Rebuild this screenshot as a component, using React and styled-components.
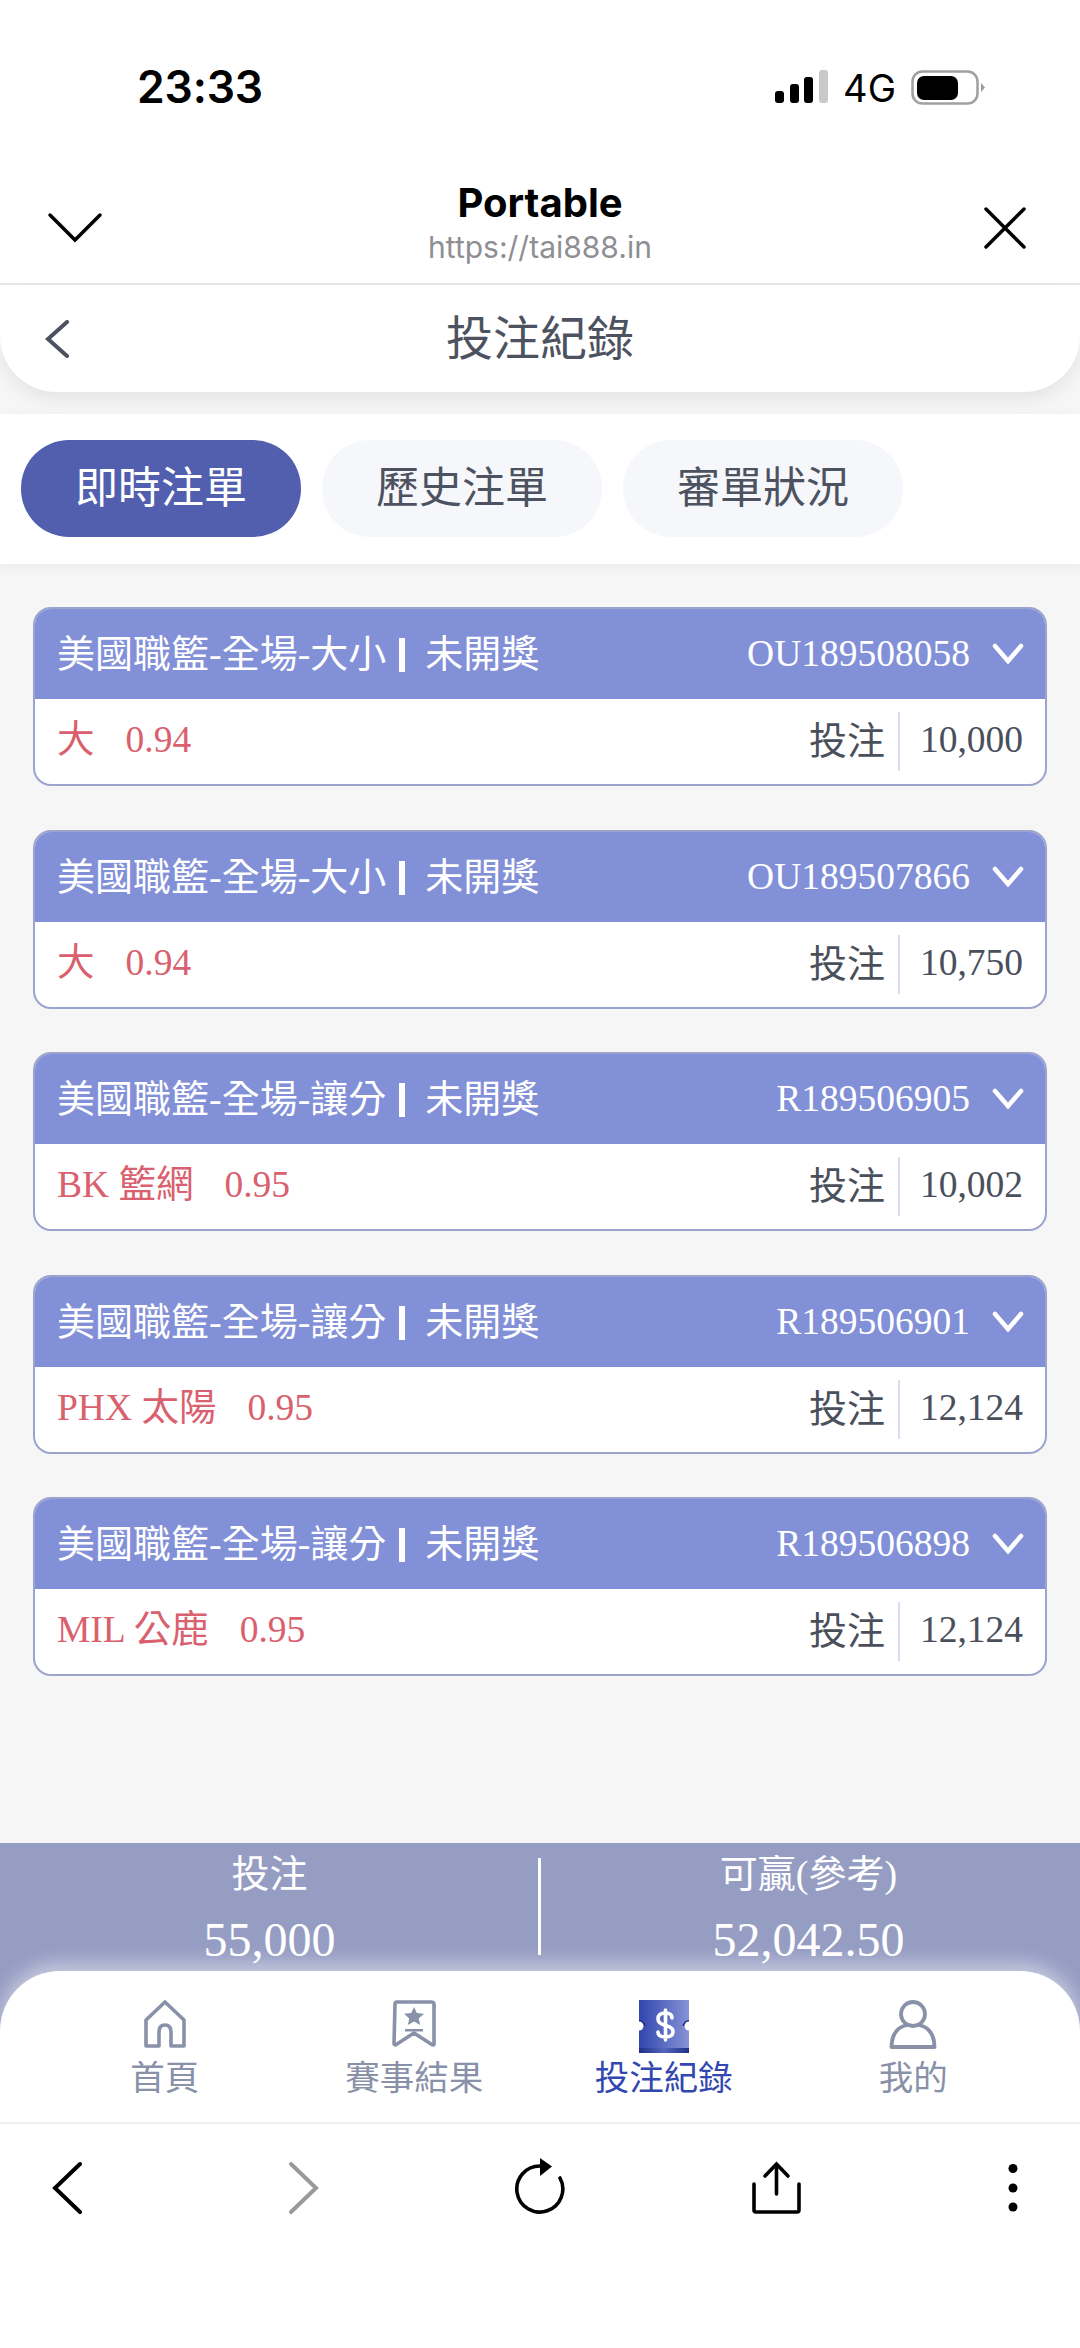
import React from 'react';
import styled, { createGlobalStyle } from 'styled-components';

const serifStack = '"Liberation Serif", "Noto Sans CJK TC", serif';
const sansStack = 'Inter, "Noto Sans CJK TC", sans-serif';

const Global = createGlobalStyle`
  html, body { margin: 0; padding: 0; background: #fff; }
  #root { height: 2348px; }
  * { box-sizing: border-box; }
`;

const Page = styled.div`
  width: 1080px;
  height: 2348px;
  display: flex;
  flex-direction: column;
  background: #f6f6f6;
  overflow: hidden;
  font-family: ${serifStack};
`;

const StatusBar = styled.div`
  height: 140px;
  background: #fff;
  display: flex;
  justify-content: space-between;
  padding: 62px 95px 0 137px;
`;
const Clock = styled.div`
  font: 600 44.5px/50px Inter, sans-serif;
  color: #000;
  letter-spacing: -0.2px;
`;
const StatusIcons = styled.div`
  display: flex;
  align-items: flex-start;
  padding-top: 8px;
  gap: 14px;
`;
const Network = styled.span`
  font: 400 38px/36px Inter, sans-serif;
  color: #000;
  margin-right: 1px;
`;

const TitleBar = styled.div`
  height: 145px;
  background: #fff;
  border-bottom: 2px solid #e8e8ea;
  display: grid;
  grid-template-columns: 1fr auto 1fr;
  padding: 0 54px;
  align-items: center;
`;
const TitleText = styled.div`
  display: flex;
  flex-direction: column;
  align-items: center;
  padding-top: 22px;
`;
const AppName = styled.div`
  font: 700 40px/48px Inter, sans-serif;
  color: #000;
`;
const AppUrl = styled.div`
  font: 400 30px/40px Inter, sans-serif;
  color: #8e8e93;
`;
const TitleSide = styled.div`
  display: flex;
  justify-content: ${(p) => (p.$end ? 'flex-end' : 'flex-start')};
  margin-left: ${(p) => (p.$end ? '0' : '-7px')};
  padding-top: 32px;
`;

const PageHeader = styled.div`
  height: 107px;
  background: #fff;
  border-radius: 0 0 56px 56px;
  box-shadow: 0 8px 18px rgba(0, 0, 0, 0.07);
  display: grid;
  grid-template-columns: 1fr auto 1fr;
  align-items: center;
  padding: 0 45px;
  position: relative;
  z-index: 1;
`;
const PageTitle = styled.div`
  font: 400 47px/60px ${sansStack};
  color: #4d5260;
  margin-bottom: 2px;
`;

const TabBar = styled.div`
  margin-top: 22px;
  height: 150px;
  background: #fff;
  display: flex;
  gap: 21px;
  padding: 26px 21px 0;
  box-shadow: 0 4px 12px rgba(0, 0, 0, 0.05);
`;
const Tab = styled.div`
  width: 280px;
  height: 97px;
  border-radius: 48px;
  background: ${(p) => (p.$active ? '#515fae' : '#f6f7fb')};
  color: ${(p) => (p.$active ? '#fff' : '#4d5260')};
  font: 400 43px/94px ${sansStack};
  text-align: center;
`;

const List = styled.div`
  flex: 1;
  display: flex;
  flex-direction: column;
  gap: 43.6px;
  padding: 43px 33px 0;
`;
const Card = styled.div`
  flex: none;
  height: 179px;
  border: 2px solid #9ca4cd;
  border-radius: 18px;
  background: #fff;
  overflow: hidden;
`;
const CardHead = styled.div`
  height: 90px;
  background: #8290d8;
  color: #fff;
  display: flex;
  align-items: center;
  justify-content: space-between;
  padding: 0 21px 0 22px;
`;
const CardTitle = styled.div`
  font-size: 38px;
  line-height: 50px;
  white-space: nowrap;
`;
const Pipe = styled.span`
  display: inline-block;
  width: 6px;
  height: 34px;
  margin: 0 20px 0 13px;
  background: #fff;
  vertical-align: -5px;
`;
const Serial = styled.div`
  display: flex;
  align-items: center;
  gap: 22px;
  font-size: 37.5px;
  line-height: 50px;
`;
const CardBody = styled.div`
  height: 85px;
  display: flex;
  align-items: center;
  justify-content: space-between;
  padding: 0 22px;
`;
const Pick = styled.div`
  display: flex;
  gap: 31px;
  color: #d9606e;
  font-size: 37.5px;
  line-height: 50px;
  margin-bottom: 3px;
`;
const Stake = styled.div`
  display: flex;
  align-items: center;
  color: #4a4f5c;
  font-size: 38px;
  line-height: 50px;
`;
const StakeLabel = styled.span`
  padding-right: 13px;
  border-right: 2px solid #d8def0;
  height: 59px;
  line-height: 58px;
`;
const StakeValue = styled.span`
  width: 123px;
  text-align: right;
  font-size: 37.5px;
  margin-bottom: 3px;
`;

const Footer = styled.div`
  background: #969dc3;
`;
const Totals = styled.div`
  height: 128px;
  display: grid;
  grid-template-columns: 1fr 2px 1fr;
  color: #fff;
  text-align: center;
`;
const TotalCell = styled.div`
  display: flex;
  flex-direction: column;
  align-items: center;
  padding-top: 5px;
  margin-left: ${(p) => (p.$shift ? '-4px' : '0')};
`;
const TotalLabel = styled.div`
  font-size: 38px;
  line-height: 52px;
`;
const TotalValue = styled.div`
  font-size: 48px;
  line-height: 60px;
  margin-top: 10px;
`;
const TotalRule = styled.div`
  background: #fff;
  height: 97px;
  margin: 15px 0 0 -1px;
`;

const NavBar = styled.div`
  height: 153px;
  background: #fff;
  border-radius: 60px 60px 0 0;
  box-shadow: 0 -8px 18px rgba(255, 255, 255, 0.45);
  border-bottom: 2px solid #efeff1;
  display: grid;
  grid-template-columns: repeat(4, 249.5px);
  padding: 29px 0 0 40px;
  position: relative;
`;
const NavItem = styled.div`
  display: flex;
  flex-direction: column;
  align-items: center;
  color: ${(p) => (p.$active ? '#3347b0' : '#8891a8')};
`;
const NavIcon = styled.div`
  height: 58px;
  display: flex;
  align-items: flex-start;
  justify-content: center;
`;
const NavLabel = styled.div`
  font: 400 34.5px/44px ${sansStack};
  margin-top: -2px;
`;

const Toolbar = styled.div`
  flex: none;
  height: 224px;
  background: #fff;
  display: flex;
  justify-content: space-between;
  align-items: flex-start;
  padding: 33px 40px 0;
`;

const SignalBars = () => (
  <svg width="54" height="34" viewBox="0 0 54 34">
    <rect x="0" y="21" width="9" height="12" rx="3" fill="#000" />
    <rect x="15" y="14" width="9" height="19" rx="3" fill="#000" />
    <rect x="29" y="7" width="9" height="26" rx="3" fill="#000" />
    <rect x="44" y="0" width="9" height="33" rx="3" fill="#c9c9c9" />
  </svg>
);

const Battery = () => (
  <svg width="74" height="36" viewBox="0 0 74 36">
    <rect x="1.5" y="1.5" width="65" height="32" rx="10" fill="none" stroke="#a0a0a0" strokeWidth="2.5" />
    <rect x="6" y="6" width="41" height="24" rx="7" fill="#000" />
    <path d="M70 13 L74 17.5 L70 22 Z" fill="#9a9a9a" />
  </svg>
);

const Chevron = ({ w, h, d, color = '#000', sw = 3.5 }) => (
  <svg width={w} height={h} viewBox={`0 0 ${w} ${h}`}>
    <path d={d} fill="none" stroke={color} strokeWidth={sw} strokeLinecap="round" strokeLinejoin="miter" />
  </svg>
);

const HomeIcon = () => (
  <svg width="44" height="48" viewBox="0 0 44 48">
    <path d="M22 2 L41 20 V46 H28 V32 Q28 25 22 25 Q16 25 16 32 V46 H3 V20 Z" fill="none" stroke="#8891a8" strokeWidth="3.6" strokeLinejoin="round" />
  </svg>
);

const ResultIcon = () => (
  <svg width="46" height="48" viewBox="0 0 46 48">
    <path d="M4 4 Q4 2 6 2 H40 Q43 2 43 4 V44 Q43 46 40 44 L23 33 L6 44 Q4 46 3 44 Z" fill="none" stroke="#8891a8" strokeWidth="3.6" strokeLinejoin="round" />
    <path d="M23 7 L25.8 13 L33 13.8 L27.7 18.4 L29.2 25 L23 21.6 L16.8 25 L18.3 18.4 L13 13.8 L20.2 13 Z" fill="#8891a8" />
    <rect x="14" y="29" width="18" height="2.5" fill="#8891a8" />
  </svg>
);

const TicketIcon = () => (
  <svg width="50" height="54" viewBox="0 0 50 54">
    <defs>
      <linearGradient id="ticketFill" x1="0" x2="1" y1="0" y2="0">
        <stop offset="0" stopColor="#3145ad" />
        <stop offset="1" stopColor="#8693d7" />
      </linearGradient>
      <linearGradient id="ticketBand" x1="0" x2="1" y1="0" y2="0">
        <stop offset="0" stopColor="#1f2f8c" />
        <stop offset="0.5" stopColor="#5566bb" />
        <stop offset="1" stopColor="#1f2f8c" />
      </linearGradient>
    </defs>
    <rect x="0" y="0" width="50" height="53" fill="url(#ticketFill)" />
    <rect x="0" y="48" width="50" height="5" fill="url(#ticketBand)" />
    <path d="M0 21 A5.5 5.5 0 0 1 5.5 26" fill="none" stroke="#1f2f8c" strokeWidth="2" />
    <path d="M50 21 A5.5 5.5 0 0 0 44.5 26" fill="none" stroke="#1f2f8c" strokeWidth="2" />
    <circle cx="0" cy="26" r="4.5" fill="#fff" />
    <circle cx="50" cy="26" r="4.5" fill="#fff" />
    <path d="M33 18 C33 14 30 13 26.5 13 C22 13 19 15 19 19 C19 23 23 24.5 26.5 25.5 C31 26.5 34 28 34 31.5 C34 35.5 31 37 26.5 37 C22 37 19 35.5 19 32 M26.5 10 V40" fill="none" stroke="#fff" strokeWidth="3.6" strokeLinecap="round" />
  </svg>
);

const PersonIcon = () => (
  <svg width="48" height="50" viewBox="0 0 48 50">
    <circle cx="24" cy="14" r="12" fill="none" stroke="#8891a8" strokeWidth="3.8" />
    <path d="M2.5 47 Q3 28 18 25 M45.5 47 Q45 28 30 25 M2.5 47 H45.5" fill="none" stroke="#8891a8" strokeWidth="3.8" strokeLinecap="round" />
  </svg>
);

const BackIcon = () => (
  <Chevron w={54} h={58} d="M40 7 L15 31 L40 55" sw={4} />
);

const ForwardIcon = () => (
  <Chevron w={54} h={58} d="M14 7 L39 31 L14 55" color="#999" sw={4} />
);

const ReloadIcon = () => (
  <svg width="54" height="58" viewBox="0 0 54 58">
    <path d="M27 9 A23 23 0 1 0 47 21" fill="none" stroke="#000" strokeWidth="3.6" strokeLinecap="round" />
    <path d="M27 1 L39 9.5 L27 19 Z" fill="#000" />
  </svg>
);

const ShareIcon = () => (
  <svg width="54" height="58" viewBox="0 0 54 58">
    <path d="M4 27 V53 Q4 55 6 55 H47 Q49 55 49 53 V27" fill="none" stroke="#000" strokeWidth="3.6" strokeLinecap="round" />
    <path d="M26.5 37 V8 M15 19 L26.5 7 L38 19" fill="none" stroke="#000" strokeWidth="3.6" strokeLinecap="round" />
  </svg>
);

const DotsIcon = () => (
  <svg width="54" height="58" viewBox="0 0 54 58">
    <circle cx="27" cy="11.5" r="4.5" fill="#000" />
    <circle cx="27" cy="31" r="4.5" fill="#000" />
    <circle cx="27" cy="50" r="4.5" fill="#000" />
  </svg>
);

const bets = [
  { league: '美國職籃-全場-大小', serial: 'OU189508058', pick: '大', odds: '0.94', amount: '10,000' },
  { league: '美國職籃-全場-大小', serial: 'OU189507866', pick: '大', odds: '0.94', amount: '10,750' },
  { league: '美國職籃-全場-讓分', serial: 'R189506905', pick: 'BK 籃網', odds: '0.95', amount: '10,002' },
  { league: '美國職籃-全場-讓分', serial: 'R189506901', pick: 'PHX 太陽', odds: '0.95', amount: '12,124' },
  { league: '美國職籃-全場-讓分', serial: 'R189506898', pick: 'MIL 公鹿', odds: '0.95', amount: '12,124' },
];

const tabs = ['即時注單', '歷史注單', '審單狀況'];

const navItems = [
  { label: '首頁', icon: <HomeIcon /> },
  { label: '賽事結果', icon: <ResultIcon /> },
  { label: '投注紀錄', icon: <TicketIcon />, active: true },
  { label: '我的', icon: <PersonIcon /> },
];

export default function App() {
  return (
    <Page>
      <Global />
      <StatusBar>
        <Clock>23:33</Clock>
        <StatusIcons>
          <SignalBars />
          <Network>4G</Network>
          <Battery />
        </StatusIcons>
      </StatusBar>

      <TitleBar>
        <TitleSide>
          <Chevron w={56} h={32} d="M3 3 L28 28 L53 3" />
        </TitleSide>
        <TitleText>
          <AppName>Portable</AppName>
          <AppUrl>https://tai888.in</AppUrl>
        </TitleText>
        <TitleSide $end>
          <Chevron w={42} h={42} d="M2 2 L40 40 M40 2 L2 40" />
        </TitleSide>
      </TitleBar>

      <PageHeader>
        <Chevron w={24} h={38} d="M22 2 L3 19 L22 36" color="#4d5260" sw={4} />
        <PageTitle>投注紀錄</PageTitle>
      </PageHeader>

      <TabBar>
        {tabs.map((t, i) => (
          <Tab key={t} $active={i === 0}>{t}</Tab>
        ))}
      </TabBar>

      <List>
        {bets.map((b) => (
          <Card key={b.serial}>
            <CardHead>
              <CardTitle>
                {b.league}
                <Pipe />
                未開獎
              </CardTitle>
              <Serial>
                {b.serial}
                <Chevron w={32} h={22} d="M3 3 L16 18 L29 3" color="#fff" sw={4.5} />
              </Serial>
            </CardHead>
            <CardBody>
              <Pick>
                <span>{b.pick}</span>
                <span>{b.odds}</span>
              </Pick>
              <Stake>
                <StakeLabel>投注</StakeLabel>
                <StakeValue>{b.amount}</StakeValue>
              </Stake>
            </CardBody>
          </Card>
        ))}
      </List>

      <Footer>
        <Totals>
          <TotalCell>
            <TotalLabel>投注</TotalLabel>
            <TotalValue>55,000</TotalValue>
          </TotalCell>
          <TotalRule />
          <TotalCell $shift>
            <TotalLabel>可贏(參考)</TotalLabel>
            <TotalValue>52,042.50</TotalValue>
          </TotalCell>
        </Totals>
        <NavBar>
          {navItems.map((n) => (
            <NavItem key={n.label} $active={n.active}>
              <NavIcon>{n.icon}</NavIcon>
              <NavLabel>{n.label}</NavLabel>
            </NavItem>
          ))}
        </NavBar>
      </Footer>

      <Toolbar>
        <BackIcon />
        <ForwardIcon />
        <ReloadIcon />
        <ShareIcon />
        <DotsIcon />
      </Toolbar>
    </Page>
  );
}
